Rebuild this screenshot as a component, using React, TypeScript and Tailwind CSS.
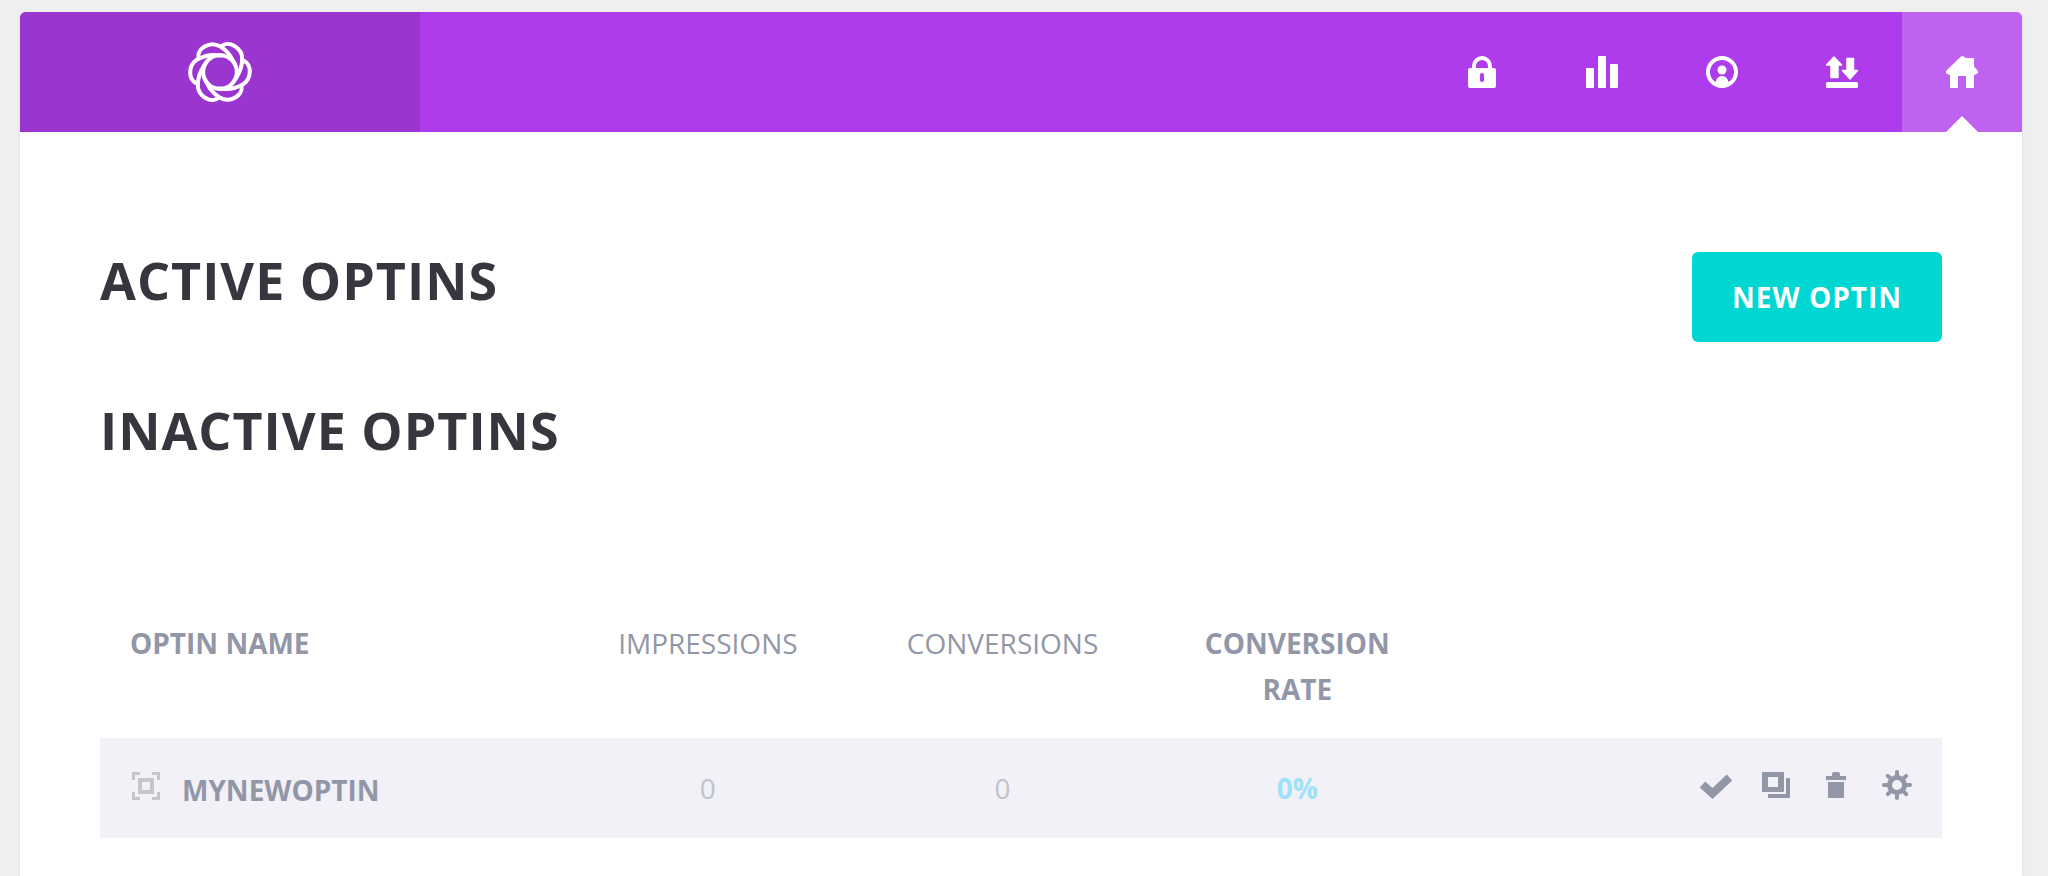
import type { ReactNode } from "react"

interface Optin {
  id: string
  name: string
  impressions: number
  conversions: number
  rate: number
}

const inactiveOptins: Optin[] = [
  { id: "optin_1", name: "MyNewOptin", impressions: 0, conversions: 0, rate: 0 },
]

// One petal of the logo, repeated every 60 degrees
const PETAL = "M-12 -20.5C-11.5 -26 -7 -29.8 -0.5 -29.8C6.500 -29.8 10.500 -26.500 13 -22C15.500 -17 17.300 -11 17 -5C17 -2 16.800 0 16.500 2"

function Logo() {
  return (
    <svg viewBox="-34 -34 68 68" className="size-[68px]" fill="none" stroke="#fff" strokeWidth="4">
      {[30, 90, 150, 210, 270, 330].map((angle) => (
        <path key={angle} d={PETAL} transform={`rotate(${angle})`} />
      ))}
      <circle r="16.8" />
    </svg>
  )
}

function Icon({ children }: { children: ReactNode }) {
  return (
    <svg viewBox="0 0 32 32" className="size-8" fill="currentColor" aria-hidden="true">
      {children}
    </svg>
  )
}

const navItems = [
  {
    key: "accounts",
    label: "Email Accounts",
    icon: (
      <Icon>
        <path
          fillRule="evenodd"
          d="M6 12V10a10 10 0 0 1 20 0v2h2a2 2 0 0 1 2 2v16a2 2 0 0 1-2 2H4a2 2 0 0 1-2-2V14a2 2 0 0 1 2-2zM10 12h12v-2a6 6 0 0 0-12 0zM16 17a2 2 0 0 0-2 2v5a2 2 0 0 0 4 0v-5a2 2 0 0 0-2-2z"
        />
      </Icon>
    ),
  },
  {
    key: "stats",
    label: "Statistics",
    icon: (
      <Icon>
        <rect x="0" y="12" width="8" height="20" rx="1" />
        <rect x="12" y="0" width="8" height="32" rx="1" />
        <rect x="24" y="8" width="8" height="24" rx="1" />
      </Icon>
    ),
  },
  {
    key: "support",
    label: "Support",
    icon: (
      <Icon>
        <circle cx="16" cy="16" r="14" fill="none" stroke="currentColor" strokeWidth="4" />
        <circle cx="16" cy="14" r="4.5" />
        <path d="M9 28c1-5.500 3.500-8 7-8s6 2.500 7 8l-7 3z" />
      </Icon>
    ),
  },
  {
    key: "portability",
    label: "Import & Export",
    icon: (
      <Icon>
        <g stroke="currentColor" strokeWidth="1.500" strokeLinejoin="round">
          <path d="M8 1l7.500 8h-3.500v12.500H5V9H.500z" />
          <path d="M21 2.500h6.500V14.500H31.500l-7.500 8.500L16.500 14.500H21z" />
        </g>
        <rect x="0" y="26" width="32" height="6" rx="1.500" />
      </Icon>
    ),
  },
  {
    key: "home",
    label: "Home",
    icon: (
      <Icon>
        <path
          stroke="currentColor"
          strokeWidth="2"
          strokeLinejoin="round"
          d="M16 1l4 2h7v8l4.500 5-2 1.500H27V31h-6V20q0-1-1-1h-8q-1 0-1 1v11H5V17.500H2.500L.500 16z"
        />
      </Icon>
    ),
    active: true,
  },
]

const actions = [
  {
    key: "activate",
    label: "Make active",
    icon: <path d="M2.500 15.500L12.500 24.500L29.500 8.500" fill="none" stroke="currentColor" strokeWidth="8" />,
  },
  {
    key: "duplicate",
    label: "Duplicate",
    icon: (
      <>
        <path fillRule="evenodd" d="M3 3h20a1 1 0 0 1 1 1v18a1 1 0 0 1-1 1H3a1 1 0 0 1-1-1V4a1 1 0 0 1 1-1zM8 8v10h10V8z" />
        <path d="M27 9h2a1 1 0 0 1 1 1v18a1 1 0 0 1-1 1H9a1 1 0 0 1-1-1v-3h18V10z" />
      </>
    ),
  },
  {
    key: "delete",
    label: "Delete",
    icon: (
      <>
        <path d="M12 7V5a2 2 0 0 1 2-2h4a2 2 0 0 1 2 2v2h5a1 1 0 0 1 1 1v3H6V8a1 1 0 0 1 1-1z" />
        <path d="M8 13h16v15a1 1 0 0 1-1 1H9a1 1 0 0 1-1-1z" />
      </>
    ),
  },
  {
    key: "settings",
    label: "Settings",
    icon: (
      <g fill="none" stroke="currentColor" strokeLinecap="round">
        <circle cx="17" cy="16" r="7.500" strokeWidth="5" />
        {[0, 45, 90, 135, 180, 225, 270, 315].map((angle) => (
          <path key={angle} d="M17 7V3" strokeWidth="4" transform={`rotate(${angle} 17 16)`} />
        ))}
      </g>
    ),
  },
]

export default function App() {
  return (
    <div className="flex min-h-screen flex-col bg-[#efefef] pt-3 pr-[26px] pl-5 font-['Open_Sans',sans-serif]">
      <main className="grow rounded-t-md bg-white shadow-sm">
        <header className="flex h-[120px] overflow-hidden rounded-t-md bg-[#af3cec] text-white">
          <a href="#" aria-label="Bloom" className="flex w-1/5 items-center justify-center bg-[#9a35d0]">
            <Logo />
          </a>
          <nav className="ml-auto flex">
            {navItems.map((item) => (
              <a
                key={item.key}
                href={`#${item.key}`}
                aria-label={item.label}
                className={
                  item.active
                    ? "relative flex w-[120px] items-center justify-center bg-[#bf62ef]"
                    : "flex w-[120px] items-center justify-center"
                }
              >
                {item.icon}
                {item.active && (
                  <span className="absolute bottom-0 left-1/2 -translate-x-1/2 border-x-16 border-b-16 border-x-transparent border-b-white" />
                )}
              </a>
            ))}
          </nav>
        </header>

        <div className="px-20 pt-[120px]">
          <div className="flex items-start justify-between">
            <h1 className="text-[52px] leading-14 font-bold tracking-[1px] text-[#36363f] uppercase">Active Optins</h1>
            <button
              type="button"
              className="h-[90px] rounded-md bg-[#00d7d2] px-10 text-[28px] font-bold tracking-[1px] text-white uppercase"
            >
              New Optin
            </button>
          </div>

          <h2 className="mt-[60px] text-[52px] leading-14 font-bold tracking-[1px] text-[#36363f] uppercase">
            Inactive Optins
          </h2>

          <table className="mt-[162px] w-full table-fixed text-[28px] leading-[46px] text-[#9297a8]">
            <thead>
              <tr className="align-top uppercase">
                <th className="w-1/4 pb-[26px] pl-[30px] text-left font-bold">Optin Name</th>
                <th className="w-[16%] px-10 pb-[26px] font-normal">Impressions</th>
                <th className="w-[16%] px-10 pb-[26px] font-normal">Conversions</th>
                <th className="w-[16%] px-10 pb-[26px] font-bold">Conversion Rate</th>
                <td />
              </tr>
            </thead>
            <tbody>
              {inactiveOptins.map((optin) => (
                <tr key={optin.id} className="h-[100px] bg-[#f1f1f7] text-center">
                  <td className="pt-1 pl-[30px]">
                    <div className="flex items-center gap-5 font-bold uppercase">
                      <svg viewBox="0 0 32 32" className="mb-2 size-8 text-[#c3c7cc]" fill="none" stroke="currentColor">
                        <path d="M3.500 10V3.500H10M22 3.500h6.500V10M28.500 22v6.500H22M10 28.500H3.500V22" strokeWidth="3" />
                        <rect x="10" y="10" width="12" height="12" strokeWidth="4" />
                      </svg>
                      {optin.name}
                    </div>
                  </td>
                  <td className="text-[#bfc3cb]">{optin.impressions}</td>
                  <td className="text-[#bfc3cb]">{optin.conversions}</td>
                  <td className="font-bold text-[#9de2f8]">{optin.rate}%</td>
                  <td className="pr-[30px] pb-[6px]">
                    <div className="flex justify-end gap-7">
                      {actions.map((action) => (
                        <button key={action.key} type="button" aria-label={action.label}>
                          <Icon>{action.icon}</Icon>
                        </button>
                      ))}
                    </div>
                  </td>
                </tr>
              ))}
            </tbody>
          </table>
        </div>
      </main>
    </div>
  )
}
